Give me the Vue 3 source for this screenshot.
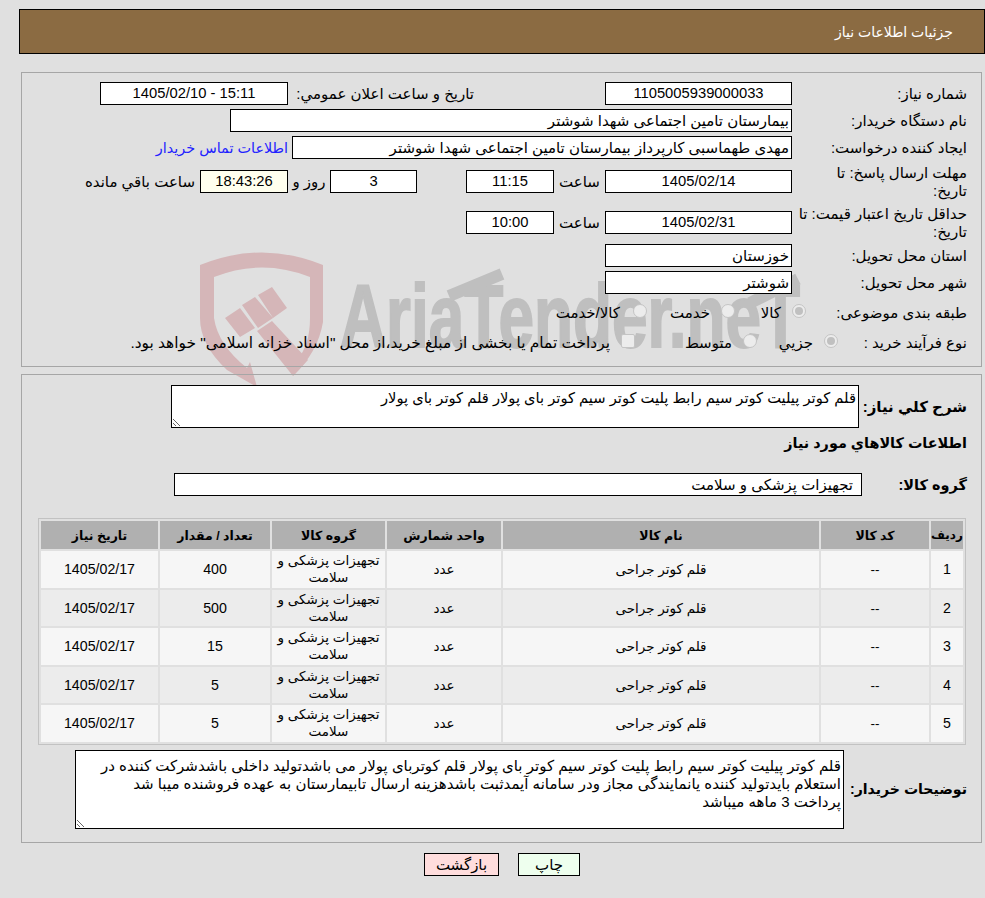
<script setup>
const desc = 'قلم کوتر پیلیت کوتر سیم رابط پلیت کوتر سیم کوتر بای پولار قلم کوتر بای پولار'
const notes = 'قلم کوتر پیلیت کوتر سیم رابط پلیت کوتر سیم کوتر بای پولار قلم کوتربای پولار می باشدتولید داخلی باشدشرکت کننده در\nاستعلام بایدتولید کننده یانمایندگی مجاز ودر سامانه آیمدثبت باشدهزینه ارسال تابیمارستان به عهده فروشنده میبا شد\nپرداخت 3 ماهه میباشد'
const rows = [
  { id: 1, qty: 400 },
  { id: 2, qty: 500 },
  { id: 3, qty: 15 },
  { id: 4, qty: 5 },
  { id: 5, qty: 5 }
]
</script>

<template>
  <div class="page">
    <svg class="mark" viewBox="0 0 985 898" width="985" height="898" aria-hidden="true">
      <path class="shield" fill-rule="evenodd" d="M200 265 Q262 240 323 265 L323 322 Q318 352 293 376 L297 360 Q310 345 310 318 L310 277 Q262 258 214 277 L214 318 Q218 345 247 368 L250 362 L257 387 L227 370 Q200 345 200 318 Z" />
      <path class="shield" d="M225 318 L240 308 L255 328 L240 337 Z M242 305 L255 297 L273 318 L258 328 Z M258 295 L272 287 L287 308 L273 318 Z M257 331 L272 321 L308 360 L293 376 Z" />
      <text class="mark-text" x="340" y="347" textLength="460" lengthAdjust="spacingAndGlyphs">AriaTender.neT</text>
      <path class="swash" d="M449 296 L502 274 M750 303 L798 279" />
    </svg>

    <div class="content">
      <header class="bar"><h1>جزئیات اطلاعات نیاز</h1></header>

      <section class="panel top">
        <div class="row h23 mb4">
          <div class="lab">شماره نیاز:</div>
          <div class="box w187 num">1105005939000033</div>
          <div class="lab2">تاریخ و ساعت اعلان عمومي:</div>
          <div class="box w188 num">15:11 - 1405/02/10</div>
        </div>
        <div class="row h23 mb4">
          <div class="lab">نام دستگاه خریدار:</div>
          <div class="box w562 start">بیمارستان تامین اجتماعی شهدا شوشتر</div>
        </div>
        <div class="row h23 mb6">
          <div class="lab">ایجاد کننده درخواست:</div>
          <div class="box w500 start">مهدی طهماسبی کارپرداز بیمارستان تامین اجتماعی شهدا شوشتر</div>
          <a class="link" href="#">اطلاعات تماس خریدار</a>
        </div>
        <div class="row h33 mb7">
          <div class="lab">مهلت ارسال پاسخ: تا<br />تاریخ:</div>
          <div class="box w187 num">1405/02/14</div>
          <div class="unit w51">ساعت</div>
          <div class="box w88 num">11:15</div>
          <div class="box w87 num ml">3</div>
          <div class="unit w42">روز و</div>
          <div class="box w88 num clock">18:43:26</div>
          <div class="remain">ساعت باقي مانده</div>
        </div>
        <div class="row h35 mb4">
          <div class="lab">حداقل تاریخ اعتبار قیمت: تا<br />تاریخ:</div>
          <div class="box w187 num">1405/02/31</div>
          <div class="unit w51">ساعت</div>
          <div class="box w88 num">10:00</div>
        </div>
        <div class="row h23 mb4">
          <div class="lab">استان محل تحویل:</div>
          <div class="box w187 start">خوزستان</div>
        </div>
        <div class="row h23 mb6">
          <div class="lab">شهر محل تحویل:</div>
          <div class="box w187 start">شوشتر</div>
        </div>
        <div class="row h26 mb4">
          <div class="lab lab-r8">طبقه بندی موضوعی:</div>
          <div class="opt w71"><span class="radio on"></span><span>کالا</span></div>
          <div class="opt w88"><span class="radio"></span><span>خدمت</span></div>
          <div class="opt wide-gap"><span class="radio"></span><span>کالا/خدمت</span></div>
        </div>
        <div class="row h26">
          <div class="lab lab-r9">نوع فرآیند خرید :</div>
          <div class="opt w81"><span class="radio on"></span><span>جزيي</span></div>
          <div class="opt w122"><span class="radio"></span><span>متوسط</span></div>
          <div class="opt"><span class="check"></span><span class="long">پرداخت تمام یا بخشی از مبلغ خرید،از محل "اسناد خزانه اسلامی" خواهد بود.</span></div>
        </div>
      </section>

      <section class="panel bottom">
        <div class="row desc">
          <div class="blab blab-desc">شرح کلي نياز:</div>
          <textarea class="area area-desc" readonly :value="desc"></textarea>
        </div>
        <h2 class="sub">اطلاعات کالاهاي مورد نياز</h2>
        <div class="row group">
          <div class="blab blab-group">گروه کالا:</div>
          <div class="box w688 start pad8">تجهیزات پزشکی و سلامت</div>
        </div>

        <table class="grid">
          <colgroup>
            <col class="c1" /><col class="c2" /><col class="c3" /><col class="c4" />
            <col class="c5" /><col class="c6" /><col class="c7" />
          </colgroup>
          <thead>
            <tr>
              <th class="tight">ردیف</th><th>کد کالا</th><th>نام کالا</th><th>واحد شمارش</th>
              <th>گروه کالا</th><th>تعداد / مقدار</th><th>تاریخ نیاز</th>
            </tr>
          </thead>
          <tbody>
            <tr v-for="r in rows" :key="r.id">
              <td class="num">{{ r.id }}</td>
              <td>--</td>
              <td>قلم کوتر جراحی</td>
              <td>عدد</td>
              <td class="wrap">تجهیزات پزشکی و سلامت</td>
              <td class="num">{{ r.qty }}</td>
              <td class="num">1405/02/17</td>
            </tr>
          </tbody>
        </table>

        <div class="row note">
          <div class="blab blab-note">توضیحات خریدار:</div>
          <textarea class="area area-note" readonly :value="notes"></textarea>
        </div>
      </section>

      <div class="actions">
        <button class="btn print" type="button">چاپ</button>
        <button class="btn back" type="button">بازگشت</button>
      </div>
    </div>
  </div>
</template>

<style>
html, body { margin: 0; background: #e0e0e0; }
</style>

<style scoped>
.page {
  position: relative;
  width: 985px;
  height: 898px;
  overflow: hidden;
  background: #e0e0e0;
  color: #000;
  direction: rtl;
  font-family: "Liberation Sans", "DejaVu Sans", sans-serif;
  font-size: 15px;
}
.mark { position: absolute; left: 0; top: 0; direction: ltr; }
.shield { fill: #d5b6b8; }
.mark-text {
  font-family: "Liberation Sans", sans-serif;
  font-weight: 700;
  font-size: 89px;
  fill: #bfbfbf;
  stroke: #bfbfbf;
  stroke-width: 2px;
}
.swash { fill: none; stroke: #bfbfbf; stroke-width: 12px; }
.content { position: relative; padding-top: 9px; }

.bar {
  box-sizing: border-box;
  height: 45px;
  margin-left: 19px;
  background: #8b6b42;
  border: 1px solid #000;
  display: flex;
  align-items: center;
  padding-right: 31px;
}
.bar h1 { margin: 0; font-size: 14px; font-weight: 400; color: #fff; }

.panel {
  box-sizing: border-box;
  margin-left: 21px;
  margin-right: 3px;
  border: 1px solid #a6a6a6;
}
.top { height: 295px; margin-top: 18px; padding-top: 9px; }
.bottom { height: 469px; margin-top: 7px; padding-top: 10px; }

.row { display: flex; align-items: center; }
.h23 { height: 23px; }
.h26 { height: 26px; }
.h33 { height: 33px; }
.h35 { height: 35px; }
.mb4 { margin-bottom: 4px; }
.mb6 { margin-bottom: 6px; }
.mb7 { margin-bottom: 7px; }

.lab {
  box-sizing: border-box;
  flex: none;
  width: 189px;
  padding-right: 14px;
  padding-left: 2px;
  line-height: 17.5px;
  white-space: nowrap;
}
.lab-r8 { width: 175px; padding-left: 0; }
.lab-r9 { width: 143px; padding-left: 0; }

.box {
  box-sizing: border-box;
  flex: none;
  height: 23px;
  border: 1px solid #000;
  background: #fff;
  line-height: 21px;
  text-align: center;
  white-space: nowrap;
  overflow: hidden;
}
.start { text-align: right; padding-right: 2px; }
.pad8 { padding-right: 8px; }
.w187 { width: 187px; }
.w188 { width: 188px; margin-right: 4px; }
.w562 { width: 562px; }
.w500 { width: 500px; }
.w88 { width: 88px; }
.w87 { width: 87px; }
.w688 { width: 688px; }
.ml { margin-right: 49px; }
.num { font-size: 14.75px; }
.clock { background: #ffffee; }

.lab2 { flex: none; width: 313px; box-sizing: border-box; padding-right: 131px; white-space: nowrap; }
.unit { flex: none; text-align: center; }
.w51 { width: 51px; }
.w42 { width: 42px; }
.remain { margin-right: 5px; white-space: nowrap; }
.link { margin-right: 4px; color: #2222ff; text-decoration: none; white-space: nowrap; font-size: 14.4px; }

.opt { display: flex; align-items: center; gap: 11px; flex: none; white-space: nowrap; }
.wide-gap { gap: 13px; }
.long { font-size: 15.4px; }
.w71 { width: 71px; }
.w81 { width: 81px; }
.w122 { width: 122px; }
.opt.w88 { width: 88px; }
.radio, .check {
  box-sizing: border-box;
  flex: none;
  width: 14px;
  height: 14px;
  border: 1px solid #c4c4c4;
  background: #ececec;
  position: relative;
  top: -2px;
}
.radio { border-radius: 50%; }
.check { border-radius: 2px; }
.radio.on::after {
  content: "";
  position: absolute;
  left: 2px;
  top: 2px;
  width: 8px;
  height: 8px;
  border-radius: 50%;
  background: #c0c0c0;
}

.blab { flex: none; box-sizing: border-box; padding-right: 14px; font-weight: 700; font-size: 14.5px; white-space: nowrap; }
.blab-desc { width: 122px; font-size: 15px; }
.blab-group { width: 119px; }
.blab-note { width: 137px; font-size: 14.1px; }
.desc { height: 43px; }
.sub { margin: 0 14px 0 0; height: 30px; font-size: 14.4px; font-weight: 700; line-height: 30px; }
.group { margin-top: 15px; height: 23px; }

.area {
  box-sizing: border-box;
  flex: none;
  display: block;
  margin: 0;
  border: 1px solid #000;
  border-radius: 0;
  background: #fff;
  color: #000;
  font: inherit;
  line-height: 18px;
  outline: none;
  overflow: hidden;
  white-space: pre;
  resize: both;
}
.area-desc { width: 688px; height: 43px; padding: 3px 2px 0; font-size: 14.7px; }
.area-note { width: 769px; height: 79px; padding: 6px 2px 0; }

.grid {
  box-sizing: border-box;
  width: 928px;
  margin: 22px 15px 0 0;
  table-layout: fixed;
  border-collapse: separate;
  border-spacing: 2px;
  border: 1px solid #c2c2c2;
  font-size: 13.5px;
}
.c1 { width: 32px; }
.c2 { width: 108px; }
.c3 { width: 316px; }
.c4 { width: 114px; }
.c5 { width: 113px; }
.c6 { width: 110px; }
.c7 { width: 117px; }
th {
  height: 28px;
  padding: 0;
  background: #b0b0b0;
  font-size: 12.5px;
  font-weight: 700;
  text-align: center;
}
th.tight { font-size: 12px; }
td {
  box-sizing: border-box;
  height: 36.5px;
  padding: 1px 0 0;
  text-align: center;
  line-height: 17px;
}
tbody tr:nth-child(odd) td { background: #f6f6f6; }
tbody tr:nth-child(even) td { background: #ececec; }
td.wrap { padding: 0 2px; }
td.num { font-size: 14.2px; }

.note { margin-top: 5px; height: 79px; }

.actions {
  display: flex;
  justify-content: center;
  margin-top: 10px;
  padding-left: 19px;
  gap: 19px;
}
.btn {
  box-sizing: border-box;
  height: 23px;
  padding: 0;
  border: 1px solid #000;
  border-radius: 0;
  color: #000;
  font: inherit;
  font-size: 15px;
}
.print { width: 62px; background: #eeffee; }
.back { width: 75px; background: #ffdddd; }
</style>
